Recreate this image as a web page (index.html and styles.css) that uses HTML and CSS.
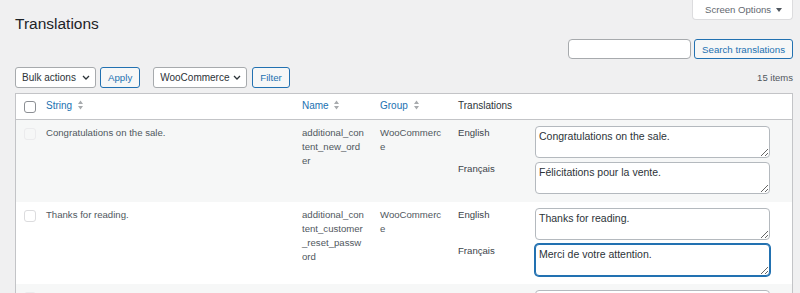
FILE: index.html
```html
<!DOCTYPE html>
<html lang="en">
<head>
  <meta charset="UTF-8" />
  <title>Translations</title>
  <meta name="viewport" content="width=device-width, initial-scale=1.0" />
  <link rel="stylesheet" href="styles.css">
</head>
<body>
  <div class="wrap">
    <div class="page-head">
      <h1>Translations</h1>
      <button type="button" class="screen-options">
        Screen Options
        <svg width="6" height="4" viewBox="0 0 6 4"><path d="M0 0H6L3 4Z" fill="#50575e"/></svg>
      </button>
    </div>

    <!-- Search -->
    <form class="search-box">
      <input type="search" />
      <button type="submit" class="button">Search translations</button>
    </form>

    <!-- Bulk actions / filter -->
    <div class="tablenav">
      <div class="actions">
        <span class="select select-bulk">
          <select><option>Bulk actions</option><option>Delete</option></select>
          <svg width="8" height="5" viewBox="0 0 8 5"><path d="M1 1L4 4L7 1" fill="none" stroke="#2c3338" stroke-width="1.3"/></svg>
        </span>
        <button type="button" class="button apply">Apply</button>
        <span class="select select-group">
          <select><option>WooCommerce</option><option>All groups</option></select>
          <svg width="8" height="5" viewBox="0 0 8 5"><path d="M1 1L4 4L7 1" fill="none" stroke="#2c3338" stroke-width="1.3"/></svg>
        </span>
        <button type="button" class="button filter">Filter</button>
      </div>
      <span class="count">15 items</span>
    </div>

    <table class="strings">
      <thead>
        <tr>
          <th class="col-check"><input type="checkbox" class="check" /></th>
          <th class="col-string"><a href="#">String <svg class="sort" width="5" height="10" viewBox="0 0 5 10"><path d="M2.5 0.5L5 4H0Z M0 6H5L2.5 9.5Z" fill="#a7aaad"/></svg></a></th>
          <th class="col-name"><a href="#">Name <svg class="sort" width="5" height="10" viewBox="0 0 5 10"><path d="M2.5 0.5L5 4H0Z M0 6H5L2.5 9.5Z" fill="#a7aaad"/></svg></a></th>
          <th class="col-group"><a href="#">Group <svg class="sort" width="5" height="10" viewBox="0 0 5 10"><path d="M2.5 0.5L5 4H0Z M0 6H5L2.5 9.5Z" fill="#a7aaad"/></svg></a></th>
          <th>Translations</th>
        </tr>
      </thead>
      <tbody>
        <tr>
          <td class="col-check"><input type="checkbox" class="check faint" /></td>
          <td>Congratulations on the sale.</td>
          <td class="col-name">additional_content_new_order</td>
          <td class="col-group">WooCommerce</td>
          <td>
            <div class="tr-grid">
              <label>English</label>
              <textarea>Congratulations on the sale.</textarea>
              <label>Français</label>
              <textarea>Félicitations pour la vente.</textarea>
            </div>
          </td>
        </tr>
        <tr>
          <td class="col-check"><input type="checkbox" class="check" /></td>
          <td>Thanks for reading.</td>
          <td class="col-name">additional_content_customer_reset_password</td>
          <td class="col-group">WooCommerce</td>
          <td>
            <div class="tr-grid">
              <label>English</label>
              <textarea>Thanks for reading.</textarea>
              <label>Français</label>
              <textarea class="is-focused">Merci de votre attention.</textarea>
            </div>
          </td>
        </tr>
        <tr>
          <td class="col-check"><input type="checkbox" class="check faint" /></td>
          <td></td>
          <td class="col-name"></td>
          <td class="col-group"></td>
          <td>
            <div class="tr-grid">
              <label></label>
              <textarea></textarea>
            </div>
          </td>
        </tr>
      </tbody>
    </table>
  </div>
</body>
</html>
```

FILE: styles.css
```css
* {
  box-sizing: border-box;
}
html, body {
  overflow: hidden;
}
body {
  margin: 0;
  background: #f0f0f1;
  font-family: "Liberation Sans", Arial, sans-serif;
  font-size: 9.6px;
  color: #50575e;
}
.wrap {
  padding: 0 7px 0 15px;
}
.page-head {
  display: flex;
  justify-content: space-between;
  align-items: flex-start;
}
h1 {
  margin: 0;
  padding-top: 13px;
  font-size: 15.5px;
  line-height: 22px;
  font-weight: 400;
  color: #1d2327;
}
.screen-options {
  display: flex;
  align-items: center;
  gap: 5px;
  width: 101px;
  height: 20px;
  padding: 0 0 0 12px;
  background: #fff;
  border: 1px solid #dcdcde;
  border-top: 0;
  border-radius: 0 0 4px 4px;
  font-family: inherit;
  font-size: 9.6px;
  color: #646970;
}

/* search + buttons */
.search-box {
  display: flex;
  justify-content: flex-end;
  gap: 3px;
  margin: 4px 0 0;
}
.search-box input {
  width: 123px;
  height: 20px;
  border: 1px solid #a7aaad;
  border-radius: 4px;
  background: #fff;
}
.button {
  height: 20px;
  padding: 0 7px;
  border: 1px solid #2271b1;
  border-radius: 3px;
  background: #f6f7f7;
  color: #2271b1;
  font-family: inherit;
  font-size: 9.7px;
}
.tablenav {
  display: flex;
  justify-content: space-between;
  align-items: center;
  height: 21px;
  margin-top: 8px;
}
.tablenav .button {
  height: 21px;
}
.actions {
  display: flex;
  align-items: center;
}
.select {
  position: relative;
  display: block;
}
.select select {
  appearance: none;
  -webkit-appearance: none;
  display: block;
  height: 21px;
  padding: 0 0 0 6px;
  border: 1px solid #a7aaad;
  border-radius: 3px;
  background: #fff;
  font-family: inherit;
  font-size: 10px;
  color: #2c3338;
}
.select svg {
  position: absolute;
  right: 6px;
  top: 8px;
  pointer-events: none;
}
.select-bulk select {
  width: 81px;
}
.select-group select {
  width: 94px;
}
.apply {
  margin-left: 4px;
}
.select-group {
  margin-left: 13px;
}
.filter {
  margin-left: 5px;
}
.count {
  font-size: 9.5px;
  color: #50575e;
}

/* table */
.strings {
  width: 100%;
  margin-top: 5px;
  border: 1px solid #c3c4c7;
  border-spacing: 0;
  background: #fff;
  table-layout: fixed;
}
.strings th {
  text-align: left;
  font-weight: 400;
  font-size: 10px;
  line-height: 14px;
  padding: 5px 8px 6px;
  border-bottom: 1px solid #c3c4c7;
  color: #2c3338;
}
.strings th a {
  color: #2271b1;
  text-decoration: none;
}
.sort {
  margin-left: 3px;
  vertical-align: -1px;
}
.strings td {
  vertical-align: top;
  padding: 6px 8px 8px;
  line-height: 14px;
}
.strings tbody tr:nth-child(odd) {
  background: #f6f7f7;
}
.col-check {
  width: 22px;
}
.strings .col-check {
  padding-right: 0;
}
.col-string {
  width: 256px;
}
.col-name, .col-group {
  width: 78px;
}
.strings .col-name, .strings .col-group {
  padding-right: 7px;
  word-break: break-all;
}
.check {
  appearance: none;
  -webkit-appearance: none;
  display: block;
  width: 12px;
  height: 12px;
  margin: 2px 0 0;
  border: 1px solid #8c8f94;
  border-radius: 3px;
  background: #fff;
}
tbody .check {
  border-color: #dcdcde;
}
tbody .check.faint {
  border-color: #ebebed;
  background: transparent;
}

/* translation fields */
.tr-grid {
  display: grid;
  grid-template-columns: 77px 235px;
  row-gap: 4px;
}
.tr-grid label {
  line-height: 14px;
  color: #3c434a;
}
.tr-grid textarea {
  display: block;
  width: 235px;
  height: 32px;
  margin: 0;
  padding: 2px 3px;
  border: 1px solid #b4b9be;
  border-radius: 4px;
  background: #fff;
  font-family: inherit;
  font-size: 10.5px;
  line-height: 14px;
  color: #2c3338;
}
.tr-grid textarea.is-focused {
  border-color: #2271b1;
  box-shadow: 0 0 0 1px #2271b1;
  outline: none;
}
```
